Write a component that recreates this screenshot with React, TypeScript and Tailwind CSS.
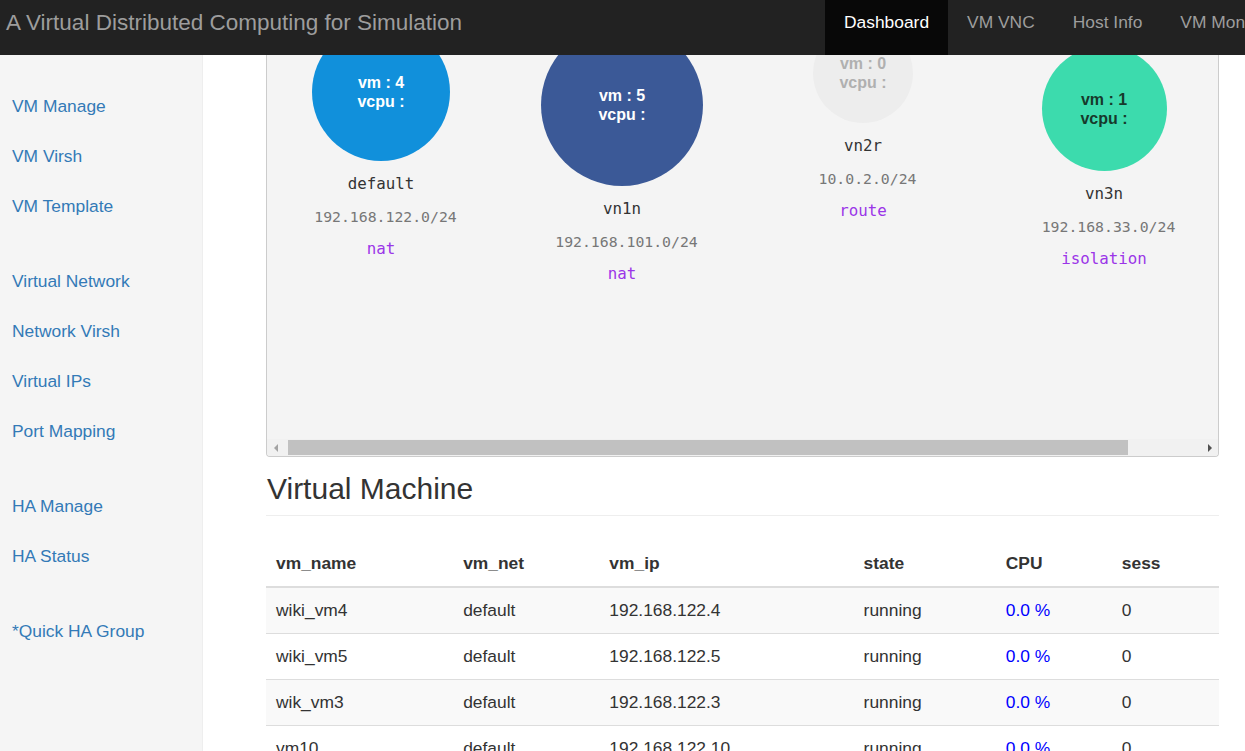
const navItems = ['Dashboard', 'VM VNC', 'Host Info', 'VM Monitor']

const sideGroups = [
  ['VM Manage', 'VM Virsh', 'VM Template'],
  ['Virtual Network', 'Network Virsh', 'Virtual IPs', 'Port Mapping'],
  ['HA Manage', 'HA Status'],
  ['*Quick HA Group'],
]

const networks = [
  { name: 'default', ip: '192.168.122.0/24', type: 'nat', vm: 4, circle: 'h-[138px] w-[138px] bg-[#1190db] text-white', offset: 'mt-0' },
  { name: 'vn1n', ip: '192.168.101.0/24', type: 'nat', vm: 5, circle: 'h-[162px] w-[162px] bg-[#3b5997] text-white', offset: 'mt-[1px]' },
  { name: 'vn2r', ip: '10.0.2.0/24', type: 'route', vm: 0, circle: 'h-[100px] w-[100px] bg-[#ededed] text-[#b0b0b0]', offset: 'mt-0' },
  { name: 'vn3n', ip: '192.168.33.0/24', type: 'isolation', vm: 1, circle: 'h-[125px] w-[125px] bg-[#3cdbad] text-[#173a2c]', offset: 'mt-[23px]' },
]

const vms = [
  ['wiki_vm4', 'default', '192.168.122.4', 'running', '0.0 %', '0'],
  ['wiki_vm5', 'default', '192.168.122.5', 'running', '0.0 %', '0'],
  ['wik_vm3', 'default', '192.168.122.3', 'running', '0.0 %', '0'],
  ['vm10', 'default', '192.168.122.10', 'running', '0.0 %', '0'],
]

const cols = ['vm_name', 'vm_net', 'vm_ip', 'state', 'CPU', 'sess']
const colWidths = ['w-[187px]', 'w-[146px]', 'w-[254px]', 'w-[142px]', 'w-[116px]', 'w-[107px]']

function Navbar() {
  return (
    <header className="flex h-[55px] w-full flex-none overflow-hidden bg-[#222]">
      <div className="w-[825px] flex-none pl-[6px] pt-[10px] text-[22.5px] leading-[26px] text-[#9d9d9d]">
        A Virtual Distributed Computing for Simulation
      </div>
      <nav className="flex flex-none">
        {navItems.map((item, i) => (
          <a
            key={item}
            className={`flex-none whitespace-nowrap px-[19px] pt-[12px] text-[17.4px] leading-[21px] ${
              i === 0 ? 'bg-[#080808] text-white' : 'text-[#9d9d9d]'
            }`}
          >
            {item}
          </a>
        ))}
      </nav>
    </header>
  )
}

function Sidebar() {
  return (
    <aside className="w-[203px] flex-none border-r border-[#eee] bg-[#f5f5f5] pt-[26px]">
      {sideGroups.map((group, gi) => (
        <ul key={gi} className={gi > 0 ? 'mt-[25px]' : ''}>
          {group.map((item) => (
            <li key={item} className="flex h-[50px] items-center pl-[12px] text-[17.4px] text-[#337ab7]">
              {item}
            </li>
          ))}
        </ul>
      ))}
    </aside>
  )
}

function Arrow({ dir }: { dir: 'left' | 'right' }) {
  return (
    <div className="flex h-[17px] w-[17px] flex-none items-center justify-center">
      <div
        className={
          dir === 'left'
            ? 'h-0 w-0 border-y-[4px] border-r-[4px] border-y-transparent border-r-[#a3a3a3]'
            : 'h-0 w-0 border-y-[4px] border-l-[4px] border-y-transparent border-l-[#505050]'
        }
      />
    </div>
  )
}

function NetworkPanel() {
  return (
    <section className="overflow-hidden rounded-b-[4px] border-x border-b border-[#ccc] bg-[#f4f4f4]">
      <div className="h-[384px] overflow-hidden">
        <div className="-mt-[32px] flex gap-[13px]">
          {networks.map((n) => (
            <div key={n.name} className={`flex w-[228px] flex-none flex-col items-center ${n.offset}`}>
              <div className={`flex flex-col items-center justify-center rounded-full text-[16px] font-bold leading-[19px] ${n.circle}`}>
                <span>vm : {n.vm}</span>
                <span>vcpu :</span>
              </div>
              <div className="mt-[13px] font-['DejaVu_Sans_Mono',monospace] text-[15.8px] leading-[20px] text-[#333]">{n.name}</div>
              <div className="mt-[13px] pl-[9px] font-['DejaVu_Sans_Mono',monospace] text-[14.8px] leading-[20px] text-[#777]">{n.ip}</div>
              <div className="mt-[12px] font-['DejaVu_Sans_Mono',monospace] text-[15.8px] leading-[20px] text-[#9b35e8]">{n.type}</div>
            </div>
          ))}
        </div>
      </div>
      <div className="flex h-[17px] bg-[#f1f1f1]">
        <Arrow dir="left" />
        <div className="ml-[4px] mt-[1px] h-[15px] w-[840px] flex-none bg-[#c1c1c1]" />
        <div className="flex-1" />
        <Arrow dir="right" />
      </div>
    </section>
  )
}

function VmTable() {
  return (
    <table className="mt-[24px] w-full table-fixed border-collapse text-[17.4px] text-[#333]">
      <colgroup>
        {colWidths.map((w, i) => (
          <col key={i} className={w} />
        ))}
      </colgroup>
      <thead>
        <tr>
          {cols.map((c) => (
            <th key={c} className="h-[47px] border-b-2 border-[#ddd] px-[10px] text-left align-middle font-bold">
              {c}
            </th>
          ))}
        </tr>
      </thead>
      <tbody>
        {vms.map((row, ri) => (
          <tr key={row[0]} className={ri % 2 === 0 ? 'bg-[#f9f9f9]' : 'bg-white'}>
            {row.map((cell, ci) => (
              <td
                key={ci}
                className={`h-[46px] border-t border-[#ddd] px-[10px] align-middle ${ci === 4 ? 'text-[#0000ff]' : ''}`}
              >
                {cell}
              </td>
            ))}
          </tr>
        ))}
      </tbody>
    </table>
  )
}

export default function App() {
  return (
    <div className="flex h-[751px] flex-col overflow-hidden bg-white font-['Liberation_Sans',Arial,sans-serif]">
      <Navbar />
      <div className="flex min-h-0 flex-1">
        <Sidebar />
        <main className="w-[1016px] flex-none pl-[63px]">
          <NetworkPanel />
          <h2 className="mt-[15px] border-b border-[#eee] pb-[10px] pl-[1px] text-[30px] leading-[33px] text-[#333]">
            Virtual Machine
          </h2>
          <VmTable />
        </main>
      </div>
    </div>
  )
}
